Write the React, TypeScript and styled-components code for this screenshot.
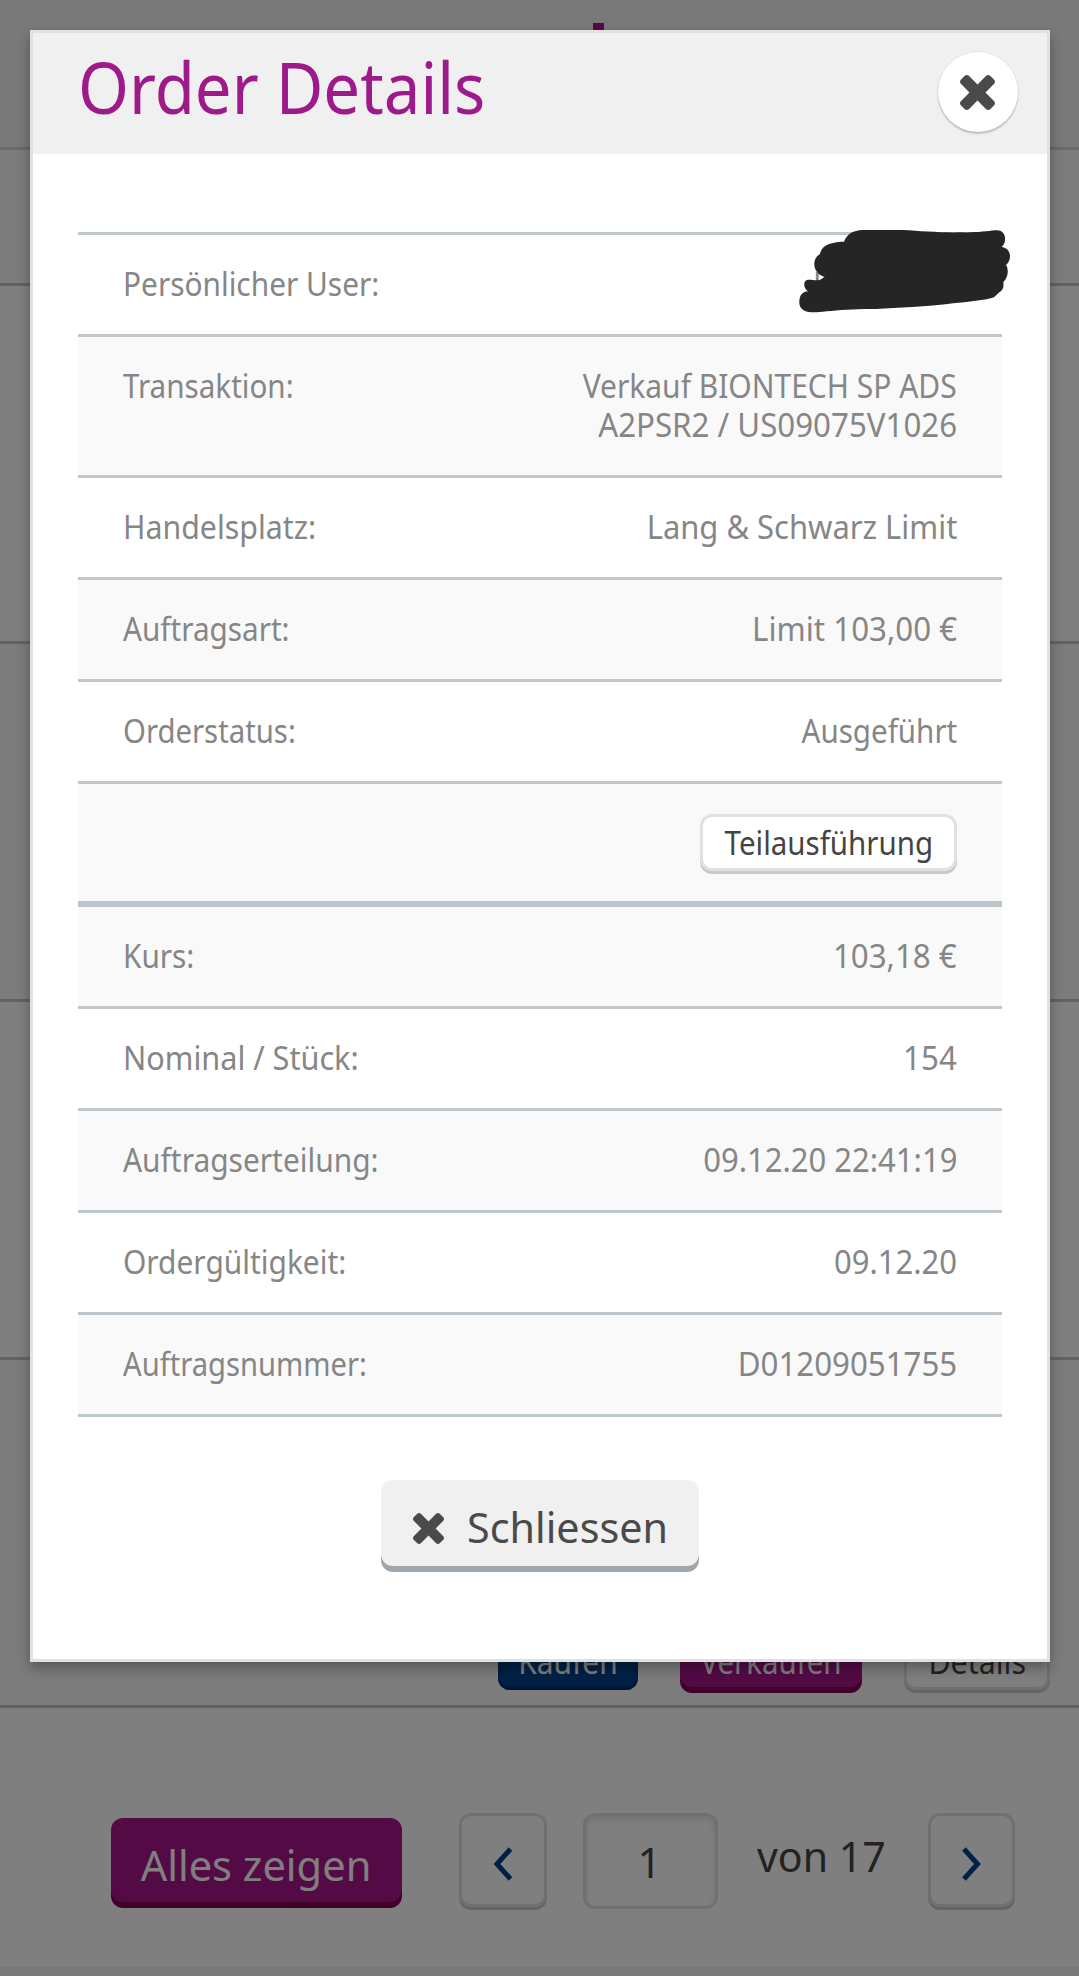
import React from "react";
import styled, { createGlobalStyle, css } from "styled-components";

const GlobalStyle = createGlobalStyle`
  *, *::before, *::after { box-sizing: border-box; }
  body {
    margin: 0;
    background: #ffffff;
    font-family: "Noto Sans", "Open Sans", sans-serif;
  }
  button, input { font-family: inherit; padding: 0; margin: 0; border: 0; }
`;

type Origin = "left" | "center" | "right";

const Fit = styled.span<{ $x: number; $origin?: Origin }>`
  display: inline-block;
  white-space: nowrap;
  transform: scaleX(${(p) => p.$x});
  transform-origin: ${(p) => p.$origin ?? "left"} center;
`;

/* ---------- order list behind the dialog ---------- */

const Page = styled.main`
  position: relative;
  display: flex;
  flex-direction: column;
  width: 1079px;
  height: 1976px;
  overflow: hidden;
  background: #f2f2f2;
`;

const TopBar = styled.header`
  display: flex;
  height: 150px;
  padding: 23px 0 0 593px;
  background: #f3f3f3;
  border-bottom: 3px solid #c9d8e2;
`;

const LogoStem = styled.div`
  width: 11px;
  height: 60px;
  background: #a6148a;
`;

const Section = styled.section<{ $height: number; $alt?: boolean }>`
  display: flex;
  align-items: flex-end;
  justify-content: flex-end;
  gap: 42px;
  height: ${(p) => p.$height}px;
  padding: 0 29px 15px 0;
  background: ${(p) => (p.$alt ? "#f9f9f9" : "#ffffff")};
  border-bottom: 3px solid #bfc7cb;
`;

type Tone = "buy" | "sell" | "plain";

const tones = {
  buy: css`
    color: #ffffff;
    background: #00428a;
    box-shadow: inset 0 -3px 3px #002a5e;
  `,
  sell: css`
    padding-top: 5px;
    color: #ffffff;
    background: #a6148a;
    box-shadow: 0 6px 0 #800050;
  `,
  plain: css`
    color: #444444;
    background: #ffffff;
    border: 3px solid #e2e1e0;
    box-shadow: 0 3px 0 #c9c9c9;
  `,
};

const SmallButton = styled.button<{ $tone: Tone; $width: number; $lift?: number }>`
  display: flex;
  align-items: center;
  justify-content: center;
  width: ${(p) => p.$width}px;
  height: 57px;
  margin-bottom: ${(p) => p.$lift ?? 0}px;
  border-radius: 12px;
  font-size: 32.5px;
  line-height: 39px;
  ${(p) => tones[p.$tone]}
`;

const Pager = styled.nav`
  display: flex;
  align-items: flex-start;
  height: 259px;
  padding: 105px 0 0 111px;
  background: #ffffff;
`;

const ShowAll = styled.button`
  display: flex;
  justify-content: center;
  width: 291px;
  height: 84px;
  margin: 5px 57px 0 0;
  padding: 20px 1px 0 0;
  border-radius: 12px;
  color: #ffffff;
  background: #a6148a;
  box-shadow: 0 6px 0 #800050;
  font-size: 41.6px;
  line-height: 54px;
`;

const StepButton = styled.button<{ $width: number }>`
  display: flex;
  align-items: center;
  justify-content: center;
  width: ${(p) => p.$width}px;
  height: 94px;
  border: 3px solid #e2e1e0;
  border-radius: 12px;
  background: #ffffff;
  box-shadow: 0 3px 0 #c9c9c9;
  svg { display: block; margin-top: 7px; }
`;

const PageInput = styled.div`
  display: flex;
  justify-content: center;
  width: 135px;
  height: 96px;
  margin: 0 36px;
  padding: 19px 2px 0 0;
  border: 3px solid #e2e1e0;
  border-radius: 12px;
  background: #ffffff;
  box-shadow: inset 0 3px 6px rgba(0, 0, 0, 0.12);
  color: #444444;
  font-size: 41.6px;
  line-height: 54px;
`;

const PageCount = styled.span`
  width: 171px;
  margin-left: 3px;
  padding-top: 16px;
  color: #444444;
  font-size: 41.6px;
  line-height: 54px;
`;

/* ---------- dialog ---------- */

const Backdrop = styled.div`
  position: absolute;
  inset: 0;
  padding: 30px 29px 0 30px;
  background: rgba(0, 0, 0, 0.5);
`;

const Dialog = styled.section`
  display: flex;
  flex-direction: column;
  height: 1632px;
  background: #ffffff;
  border: 3px solid #e2e1e0;
  box-shadow: 0 6px 12px rgba(0, 0, 0, 0.3);
`;

const DialogHeader = styled.header`
  display: flex;
  justify-content: space-between;
  align-items: flex-start;
  height: 121px;
  padding: 6px 29px 0 45px;
  background: #f0f0f0;
`;

const Title = styled.h1`
  margin: 0;
  color: #9e1a8a;
  font-size: 71px;
  font-weight: 400;
  line-height: 96px;
`;

const RoundClose = styled.button`
  display: flex;
  align-items: center;
  justify-content: center;
  width: 80px;
  height: 80px;
  margin-top: 13px;
  padding: 1px 1px 0 0;
  border-radius: 50%;
  background: #ffffff;
  color: #4a4a4a;
  box-shadow: 0 0 0 1px rgba(0, 0, 0, 0.04), 0 2px 2px rgba(0, 0, 0, 0.2);
`;

const DialogBody = styled.div`
  display: flex;
  flex-direction: column;
  align-items: center;
  padding: 78px 45px 0;
`;

const Table = styled.dl`
  width: 100%;
  margin: 0 0 63px;
  border-top: 3px solid #bec7cc;
`;

const Row = styled.div<{ $shaded?: boolean; $thick?: boolean }>`
  display: flex;
  justify-content: space-between;
  padding: 29px 45px 31px;
  background: ${(p) => (p.$shaded ? "#f9f9f9" : "#ffffff")};
  border-bottom: ${(p) => (p.$thick ? 6 : 3)}px solid #bec7cc;
  color: #868686;
  font-size: 32.5px;
  line-height: 39px;
`;

const ActionRow = styled(Row)`
  justify-content: flex-end;
  height: 123px;
  padding: 30px 45px 0;
`;

const Label = styled.dt`
  margin: 0;
`;

const Value = styled.dd`
  display: flex;
  flex-direction: column;
  align-items: flex-end;
  margin: 0;
`;

const RedactedValue = styled.dd`
  position: relative;
  width: 144px;
  margin: 0;
`;

const Scribble = styled.svg`
  position: absolute;
  left: -33px;
  top: -44px;
  width: 240px;
  height: 110px;
`;

const CloseButton = styled.button`
  display: flex;
  width: 318px;
  height: 86px;
  padding: 20px 0 0 32px;
  border-radius: 12px;
  background: #f0f0f0;
  color: #4a4a4a;
  box-shadow: 0 6px 0 #9fa7ac;
  font-size: 41.6px;
  line-height: 54px;
  svg { flex: none; margin: 13px 23px 0 0; }
`;

const CrossIcon = ({ size }: { size: number }) => (
  <svg width={size} height={size} viewBox="302 366 1188 1188" fill="currentColor">
    <path d="M1490 1322q0 40-28 68l-136 136q-28 28-68 28t-68-28l-294-294-294 294q-28 28-68 28t-68-28l-136-136q-28-28-28-68t28-68l294-294-294-294q-28-28-28-68t28-68l136-136q28-28 68-28t68 28l294 294 294-294q28-28 68-28t68 28l136 136q28 28 28 68t-28 68l-294 294 294 294q28 28 28 68z" />
  </svg>
);

const Chevron = ({ next }: { next?: boolean }) => (
  <svg width="20" height="34" viewBox="0 0 20 34" fill="none" stroke="#004490" strokeWidth="5">
    <path d={next ? "M2 2L15.5 17L2 32" : "M17.5 2L4 17L17.5 32"} />
  </svg>
);

interface Entry {
  label: string;
  labelFit: number;
  lines: [string, number][];
  shaded?: boolean;
}

const orderRows: Entry[] = [
  {
    label: "Transaktion:",
    labelFit: 0.911,
    lines: [
      ["Verkauf BIONTECH SP ADS", 0.922],
      ["A2PSR2 / US09075V1026", 0.962],
    ],
    shaded: true,
  },
  { label: "Handelsplatz:", labelFit: 0.933, lines: [["Lang & Schwarz Limit", 0.952]] },
  { label: "Auftragsart:", labelFit: 0.913, lines: [["Limit 103,00 €", 0.962]], shaded: true },
  { label: "Orderstatus:", labelFit: 0.902, lines: [["Ausgeführt", 0.909]] },
];

const executionRows: Entry[] = [
  { label: "Kurs:", labelFit: 0.915, lines: [["103,18 €", 0.962]], shaded: true },
  { label: "Nominal / Stück:", labelFit: 0.942, lines: [["154", 0.962]] },
  { label: "Auftragserteilung:", labelFit: 0.92, lines: [["09.12.20 22:41:19", 0.954]], shaded: true },
  { label: "Ordergültigkeit:", labelFit: 0.92, lines: [["09.12.20", 0.954]] },
  { label: "Auftragsnummer:", labelFit: 0.897, lines: [["D01209051755", 0.962]], shaded: true },
];

const DetailRow = ({ label, labelFit, lines, shaded }: Entry) => (
  <Row $shaded={shaded}>
    <Label>
      <Fit $x={labelFit}>{label}</Fit>
    </Label>
    <Value>
      {lines.map(([text, fit]) => (
        <Fit key={text} $x={fit} $origin="right">
          {text}
        </Fit>
      ))}
    </Value>
  </Row>
);

export default function App() {
  return (
    <Page>
      <GlobalStyle />
      <TopBar>
        <LogoStem />
      </TopBar>
      <Section $height={136} $alt />
      <Section $height={358} />
      <Section $height={358} $alt />
      <Section $height={358} />
      <Section $height={348} $alt>
        <SmallButton $tone="buy" $width={140}>
          <Fit $x={0.92} $origin="center">Kaufen</Fit>
        </SmallButton>
        <SmallButton $tone="sell" $width={182} $lift={3}>
          <Fit $x={0.905} $origin="center">Verkaufen</Fit>
        </SmallButton>
        <SmallButton $tone="plain" $width={146}>
          <Fit $x={0.935} $origin="center">Details</Fit>
        </SmallButton>
      </Section>
      <Pager>
        <ShowAll>
          <Fit $x={1} $origin="center">Alles zeigen</Fit>
        </ShowAll>
        <StepButton $width={88} aria-label="Zurück">
          <Chevron />
        </StepButton>
        <PageInput>1</PageInput>
        <PageCount>
          <Fit $x={0.987}>von 17</Fit>
        </PageCount>
        <StepButton $width={87} aria-label="Weiter">
          <Chevron next />
        </StepButton>
      </Pager>

      <Backdrop>
        <Dialog role="dialog" aria-label="Order Details">
          <DialogHeader>
            <Title>
              <Fit $x={0.92}>Order Details</Fit>
            </Title>
            <RoundClose aria-label="Schliessen">
              <CrossIcon size={35} />
            </RoundClose>
          </DialogHeader>
          <DialogBody>
            <Table>
              <Row>
                <Label>
                  <Fit $x={0.918}>Persönlicher User:</Fit>
                </Label>
                <RedactedValue>
                  <Fit $x={0.92}>P</Fit>
                  <Scribble viewBox="0 0 720 330" fill="#252525">
                    <path d="M58 245C58 225 68 215 84 214C72 208 70 190 76 183C82 177 92 180 112 181C122 181 124 176 134 171C112 162 102 148 103 130C104 115 112 107 120 102C124 82 140 66 192 65C200 42 220 31 248 30L370 30C420 33 480 38 540 37C590 38 620 34 645 31C664 28 676 40 675 56C675 70 670 76 664 81C680 82 690 94 690 108C690 122 684 130 678 135C686 146 686 172 670 186C672 202 668 212 658 217L642 232C620 240 560 246 520 250C440 260 350 264 290 267C230 266 180 270 140 274C115 277 100 278 86 276C66 272 57 260 58 245Z" />
                  </Scribble>
                </RedactedValue>
              </Row>
              {orderRows.map((row) => (
                <DetailRow key={row.label} {...row} />
              ))}
              <ActionRow $shaded $thick>
                <SmallButton $tone="plain" $width={257}>
                  <Fit $x={0.908} $origin="center">Teilausführung</Fit>
                </SmallButton>
              </ActionRow>
              {executionRows.map((row) => (
                <DetailRow key={row.label} {...row} />
              ))}
            </Table>
            <CloseButton>
              <CrossIcon size={31} />
              <Fit $x={0.993}>Schliessen</Fit>
            </CloseButton>
          </DialogBody>
        </Dialog>
      </Backdrop>
    </Page>
  );
}
